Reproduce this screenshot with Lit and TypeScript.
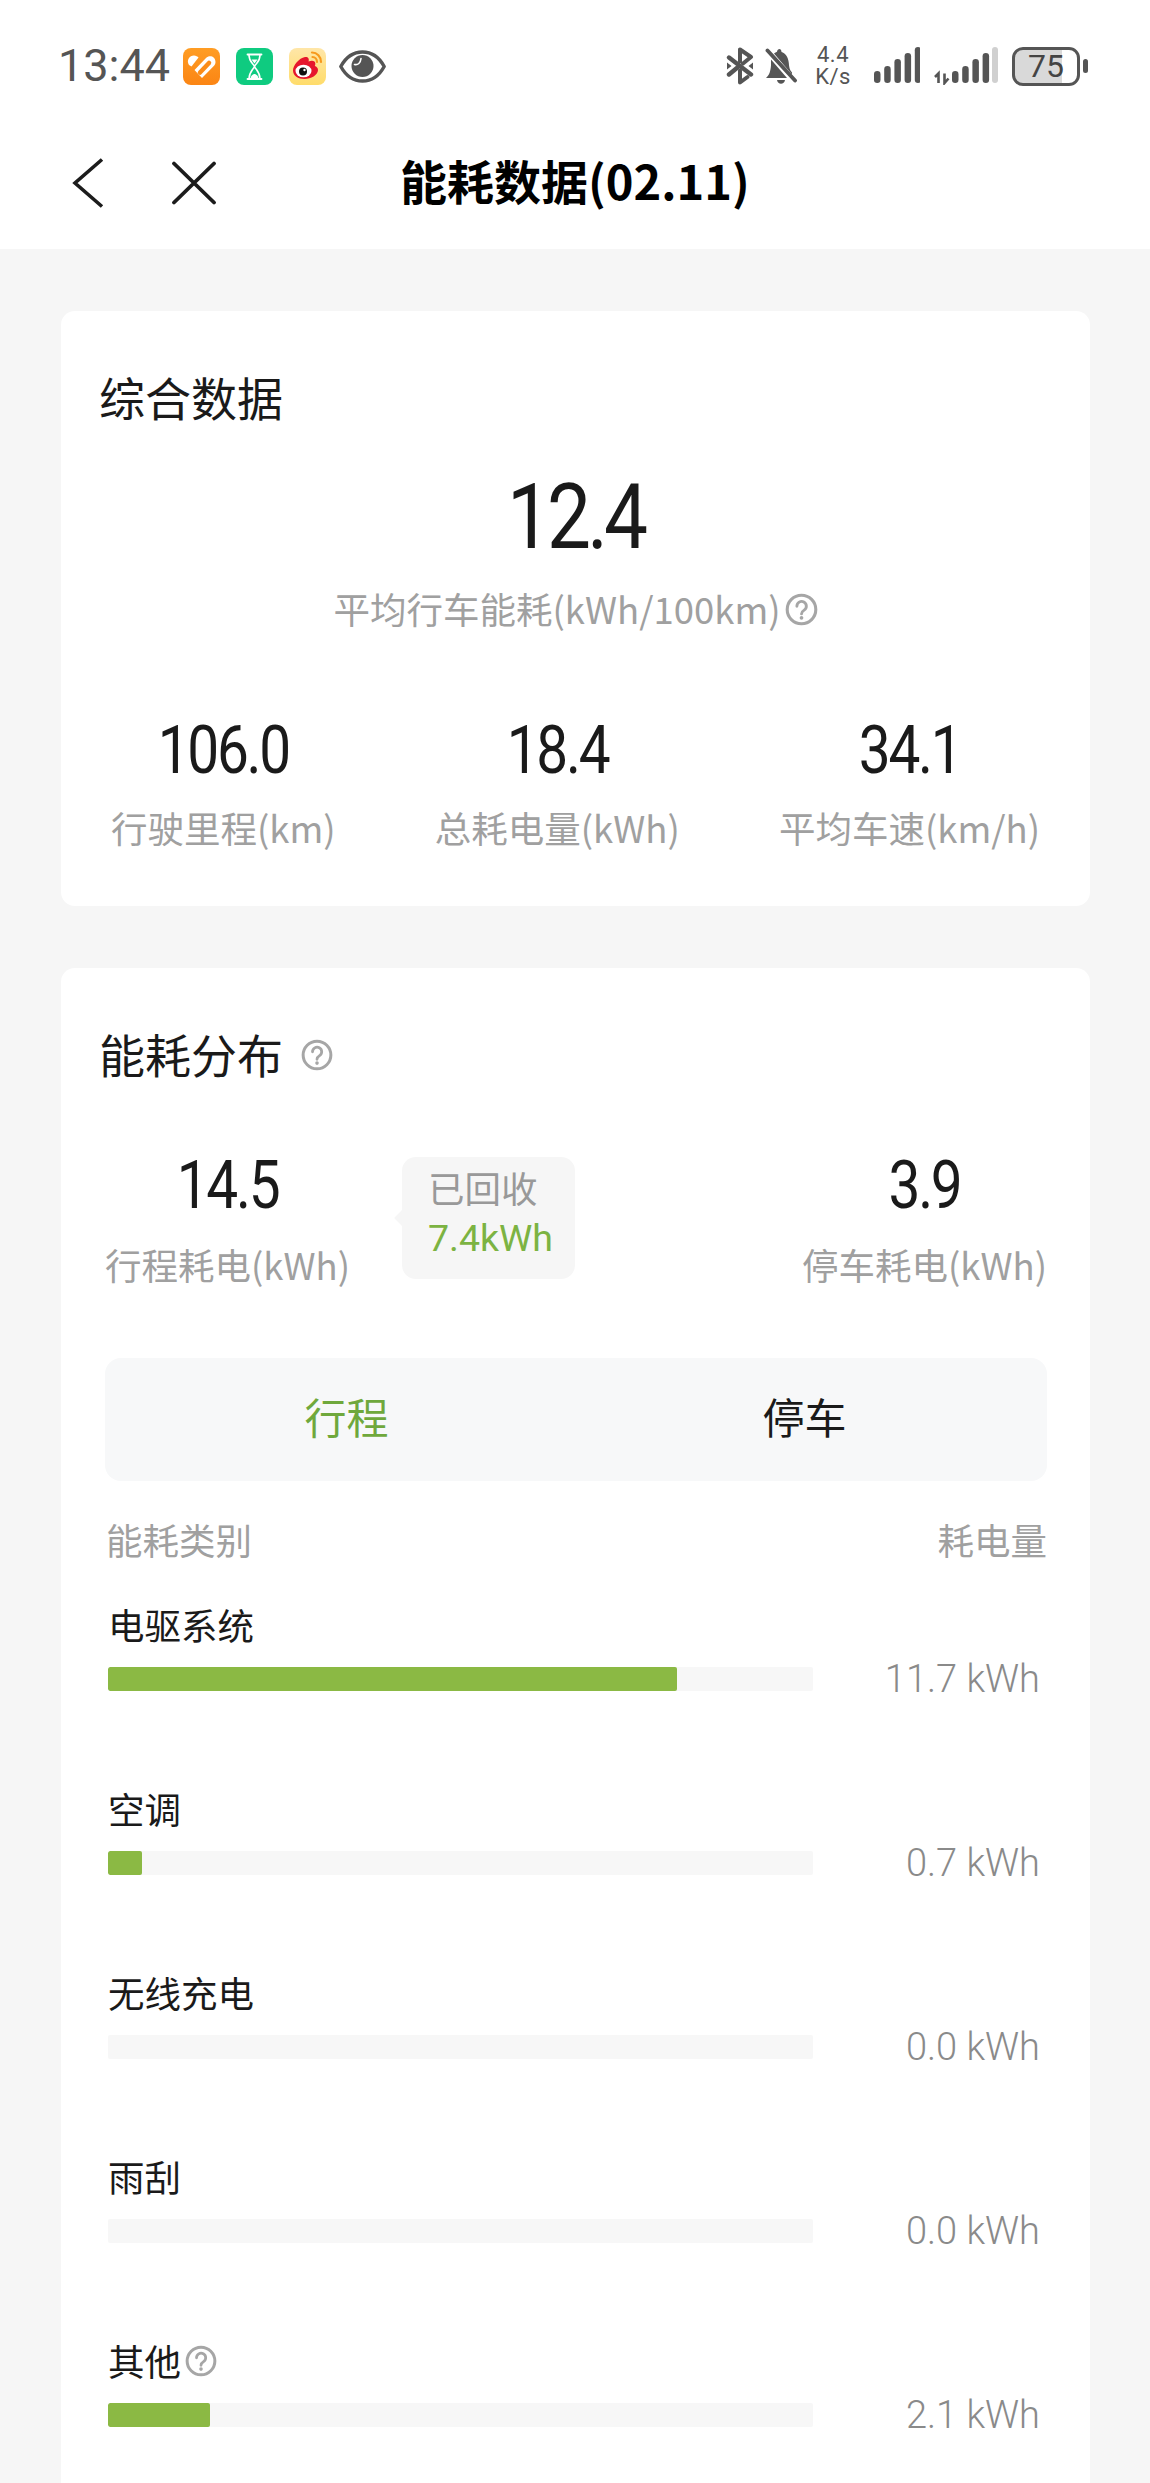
import { LitElement, html, css, svg } from "lit";
import { customElement } from "lit/decorators.js";

const help = (size: number) => html`<svg class="help" width=${size} height=${size} viewBox="0 0 30 30">
  <circle cx="15" cy="15" r="13" fill="none" stroke="#a6a6a6" stroke-width="2.8" />
  <path d="M10.800 12a4.300 4.300 0 1 1 6.600 3.600c-1.600 1-2.400 1.800-2.400 3.400" fill="none" stroke="#a6a6a6" stroke-width="2.600" stroke-linecap="round" />
  <circle cx="15" cy="22.600" r="1.700" fill="#a6a6a6" />
</svg>`;

const bars = (heights: number[], x0: number) =>
  heights.map(
    (h, i) => svg`<rect x=${x0 + i * 10.2} y=${36 - h} width="6.500" height=${h} rx="3.200" fill="#555" />`
  );

const rows = [
  { name: "电驱系统", pct: 80.7, value: "11.7 kWh" },
  { name: "空调", pct: 4.8, value: "0.7 kWh" },
  { name: "无线充电", pct: 0, value: "0.0 kWh" },
  { name: "雨刮", pct: 0, value: "0.0 kWh" },
  { name: "其他", pct: 14.5, value: "2.1 kWh", help: true },
];

@customElement("app-root")
export class AppRoot extends LitElement {
  static styles = css`
    :host {
      display: block;
      width: 1150px;
      height: 2483px;
      overflow: hidden;
      background: #f6f6f6;
      font-family: "Noto Sans CJK SC", "Noto Sans", sans-serif;
      color: #1a1a1a;
    }
    .top {
      background: #fff;
    }
    .status {
      height: 100px;
      padding-top: 16px;
      display: flex;
      align-items: center;
      padding-left: 58px;
      color: #555;
    }
    .time {
      font-family: Roboto, sans-serif;
      font-size: 45px;
      line-height: 44px;
      width: 125px;
    }
    .apps {
      display: flex;
      align-items: center;
    }
    .apps svg {
      display: block;
    }
    .apps .app {
      margin-right: 16px;
    }
    .apps .eye {
      margin-left: -3px;
    }
    .sys {
      margin-left: auto;
      display: flex;
      align-items: center;
      padding-right: 62px;
    }
    .sys svg {
      display: block;
    }
    .speed {
      width: 38px;
      margin: 0 22px 0 17px;
      font-family: Roboto, sans-serif;
      text-align: center;
      font-size: 22px;
      line-height: 22px;
      letter-spacing: 0.5px;
    }
    .battery {
      margin-left: 14px;
      width: 68px;
      height: 39px;
      box-sizing: border-box;
      border: 3px solid #555;
      border-radius: 11px;
      background: linear-gradient(90deg, #d9d9d9 76%, #fff 76%);
      font-family: Roboto, sans-serif;
      font-size: 32px;
      line-height: 33px;
      text-align: center;
      color: #444;
    }
    .tip {
      margin-left: 3px;
      width: 5px;
      height: 14px;
      border-radius: 3px;
      background: #555;
    }
    .nav {
      height: 133px;
      display: flex;
      align-items: center;
      padding-left: 72px;
    }
    .nav svg {
      display: block;
    }
    .nav .close {
      margin-left: 67px;
    }
    .title {
      margin: 0 0 6px 183px;
      font-size: 47px;
      line-height: 60px;
      font-weight: 700;
      color: #000;
      white-space: nowrap;
    }
    main {
      padding: 62px 60px 0 61px;
    }
    .card {
      background: #fff;
      border-radius: 14px;
      margin-bottom: 62px;
    }
    .overview {
      padding: 57px 50px 53px;
    }
    .card-title {
      font-size: 46px;
      line-height: 60px;
      margin-top: -2px;
      margin-bottom: 2px;
      display: flex;
      align-items: center;
    }
    .overview .card-title {
      margin-left: -12px;
    }
    .num {
      font-family: Roboto, sans-serif;
      color: #1a1a1a;
      transform: scaleX(0.86);
      letter-spacing: -0.04em;
    }
    .big {
      margin-top: 46px;
      font-size: 91px;
      line-height: 90px;
      text-align: center;
      letter-spacing: -0.05em;
    }
    .sub {
      margin-top: 22px;
      font-size: 36.5px;
      line-height: 50px;
      color: #a0a0a0;
      display: flex;
      justify-content: center;
      align-items: center;
      white-space: nowrap;
      gap: 4px;
    }
    .stats {
      margin-top: 77px;
      display: flex;
      justify-content: space-between;
      text-align: center;
    }
    .stat-value {
      font-size: 66px;
      line-height: 80px;
    }
    .stat-label {
      margin-top: 12px;
      font-size: 36.5px;
      line-height: 50px;
      color: #a0a0a0;
      white-space: nowrap;
    }
    .dist {
      padding: 57px 43px 120px 44px;
    }
    .dist .card-title {
      margin-left: -6px;
      gap: 18px;
    }
    .dist .card-title .help {
      margin-top: 3px;
    }
    .energy {
      margin-top: 63px;
      display: flex;
      align-items: flex-start;
    }
    .energy .stat {
      text-align: center;
    }
    .energy .stat-label {
      margin-top: 14px;
    }
    .energy .stat.right {
      margin-left: auto;
    }
    .recovered {
      position: relative;
      margin: 11px 0 0 52px;
      width: 173px;
      height: 122px;
      box-sizing: border-box;
      padding: 6px 0 0 26px;
      border-radius: 14px;
      background: #f6f6f6;
      font-size: 36.5px;
      line-height: 50px;
      color: #999;
    }
    .recovered::before {
      content: "";
      position: absolute;
      left: -5px;
      top: 54px;
      width: 14px;
      height: 14px;
      background: #f6f6f6;
      transform: rotate(45deg);
    }
    .recovered b {
      display: block;
      font-family: Roboto, sans-serif;
      font-weight: 400;
      color: #7cb342;
      font-size: 37.5px;
    }
    .tabs {
      margin-top: 68px;
      height: 123px;
      box-sizing: border-box;
      padding-bottom: 8px;
      border-radius: 16px;
      background: #f7f8f9;
      display: grid;
      grid-template-columns: 1fr 1fr;
      align-items: center;
      text-align: center;
      font-size: 42px;
      line-height: 60px;
    }
    .tab.on {
      color: #6fa83c;
      padding-left: 12px;
    }
    .tab.off {
      padding-right: 14px;
    }
    .head {
      margin-top: 34px;
      display: flex;
      justify-content: space-between;
      padding-left: 1px;
      font-size: 36.5px;
      line-height: 50px;
      color: #a0a0a0;
    }
    .list {
      margin-top: 35px;
      padding: 0 7px 0 3px;
      display: flex;
      flex-direction: column;
      gap: 93px;
    }
    .row-name {
      font-size: 36.5px;
      line-height: 50px;
      margin-bottom: 17px;
      display: flex;
      align-items: center;
      gap: 4px;
    }
    .row-line {
      display: flex;
      align-items: center;
      height: 24px;
    }
    .track {
      width: 705px;
      height: 24px;
      background: #f7f7f7;
      border-radius: 2px;
      overflow: hidden;
    }
    .fill {
      height: 100%;
      background: #8bb944;
      border-radius: 2px;
    }
    .row-value {
      margin-left: auto;
      font-family: Roboto, sans-serif;
      font-weight: 300;
      font-size: 38px;
      line-height: 24px;
      color: #8a8a8a;
      white-space: nowrap;
    }
  `;

  renderApps() {
    return html`<div class="apps">
      <svg class="app" width="37" height="37" viewBox="0 0 37 37">
        <defs>
          <linearGradient id="og" x1="0" y1="0" x2="0" y2="1">
            <stop offset="0" stop-color="#ff9d24" /><stop offset="1" stop-color="#fb8514" />
          </linearGradient>
        </defs>
        <rect width="37" height="37" rx="8" fill="url(#og)" />
        <path d="M6 17c-3-4.500.5-9.500 5-9.500 2 0 3.500 1 4.500 2L8.500 18.500z" fill="#fff" />
        <path d="M11.500 22 23 10c3.200-3.300 9.500-1.800 9.500 4 0 1.600-.7 3-1.700 4L19 30z" fill="#fff" />
        <path d="M17 24.500 26 15" stroke="#fb8c18" stroke-width="4.500" stroke-linecap="round" />
      </svg>
      <svg class="app" width="37" height="37" viewBox="0 0 37 37">
        <rect width="37" height="37" rx="8" fill="#0fcb80" />
        <path d="M11.500 6.500h14M11.500 31h14" stroke="#fff" stroke-width="1.800" stroke-linecap="round" />
        <path d="M13 7c0 7 4 8 5.500 11.500C17 22 13 24 13 31M24 7c0 7-4 8-5.500 11.500C20 22 24 24 24 31" fill="none" stroke="#fff" stroke-width="1.600" />
        <path d="M15.500 11.500h6L18.500 15.500z" fill="#fff" />
        <path d="M14.500 30c1-3 2.500-4 4-4s3 1 4 4z" fill="#fff" />
      </svg>
      <svg class="app" width="37" height="37" viewBox="0 0 37 37">
        <defs>
          <linearGradient id="yg" x1="0" y1="0" x2="0" y2="1">
            <stop offset="0" stop-color="#ffe6a8" /><stop offset="1" stop-color="#ffdc6a" />
          </linearGradient>
        </defs>
        <rect width="37" height="37" rx="8" fill="url(#yg)" />
        <path d="M4 22.500c0-5 6-12.500 12-13.500 3-.4 4.500 1.500 3.500 4.500 4-1.500 6.800-.5 6.800 2 0 1 0 1.800-.5 2.500 1.800.6 3.200 2 3.200 4 0 5-7 9-13.500 9C9 31 4 27.500 4 22.500z" fill="#e6162d" />
        <ellipse cx="14.500" cy="23" rx="8" ry="6.300" fill="#fff" />
        <circle cx="14" cy="23.500" r="4" fill="#111" />
        <circle cx="15.500" cy="22" r="1.200" fill="#fff" />
        <path d="M23 4.500c5 0 9 4 9 9.500M23.500 9c2.500 0 4.500 2 4.500 5" fill="none" stroke="#f7991d" stroke-width="2.200" stroke-linecap="round" />
      </svg>
      <svg class="eye" width="47" height="33" viewBox="0 0 47 33">
        <path d="M1.800 16.500C7 7 14.500 2 23.500 2s16.500 5 21.700 14.500C40 26 32.500 31 23.500 31S7 26 1.800 16.500z" fill="none" stroke="#555" stroke-width="3.400" stroke-linejoin="round" />
        <circle cx="23.500" cy="16" r="11" fill="#555" />
        <path d="M15.500 14.500c3.500.8 6-1.500 6.500-6" fill="none" stroke="#fff" stroke-width="1.600" stroke-linecap="round" />
      </svg>
    </div>`;
  }

  renderSys() {
    return html`<div class="sys">
      <svg style="margin-right:-1px" width="28" height="38" viewBox="0 0 28 38">
        <path d="M3 10.500 25 27.500M3 27.500 11.500 20.500" fill="none" stroke="#555" stroke-width="4.400" stroke-linecap="round" />
        <path d="M17 16.500 25 10 14 2.500v12M14 23.500V35.500L21.500 30" fill="none" stroke="#555" stroke-width="4" stroke-linejoin="round" stroke-linecap="round" />
        <path d="M1 15.500l4.500 3.500-4.500 3.500zM27 15.500l-4.500 3.500 4.500 3.500z" fill="#555" />
      </svg>
      <svg style="margin-left:12px" width="32" height="38" viewBox="0 0 32 38">
        <path d="M9 6.500 27 27.500V25.500c-2.500-2.500-3-6-3.200-9.500C23.300 9.500 20 6 16.500 5c0-4-4-4-4.500-.2-1 .3-2 .9-3 1.700z" fill="#555" />
        <path d="M6 12.500 22 31H1c3.500-3 4.500-7 5-12.500z" fill="#555" />
        <path d="M12 33h8c-.5 2.500-2 3.800-4 3.800S12.500 35.500 12 33z" fill="#555" />
        <path d="M2.500 3.500 30 33.500" stroke="#555" stroke-width="3.800" stroke-linecap="round" />
      </svg>
      <div class="speed">4.4<br />K/s</div>
      <svg width="46" height="38" viewBox="0 0 46 38">${bars([12, 17, 24, 30, 36], 0)}</svg>
      <svg style="margin-left:14px" width="64" height="38" viewBox="0 0 64 38">
        <path d="M1 30 4.500 26.500V36M10.500 26.500V36L14.500 31.500" fill="none" stroke="#555" stroke-width="2.600" />
        ${bars([12, 17, 24, 30], 18)}
        <rect x="58" y="0" width="6" height="36" rx="3" fill="#d0d0d0" />
      </svg>
      <div class="battery">75</div>
      <div class="tip"></div>
    </div>`;
  }

  render() {
    return html`
      <div class="top">
        <div class="status">
          <div class="time">13:44</div>
          ${this.renderApps()} ${this.renderSys()}
        </div>
        <div class="nav">
          <svg width="32" height="50" viewBox="0 0 32 50">
            <path d="M30 1.500 3 25l27 23.500" fill="none" stroke="#1c1c1c" stroke-width="3.600" />
          </svg>
          <svg class="close" width="46" height="44" viewBox="0 0 46 44">
            <path d="M3 2.500 43 41.500M43 2.500 3 41.500" fill="none" stroke="#1c1c1c" stroke-width="3.800" stroke-linecap="round" />
          </svg>
          <div class="title">能耗数据(02.11)</div>
        </div>
      </div>
      <main>
        <section class="card overview">
          <div class="card-title">综合数据</div>
          <div class="big num">12.4</div>
          <div class="sub">平均行车能耗(kWh/100km)${help(33)}</div>
          <div class="stats">
            <div><div class="stat-value num">106.0</div><div class="stat-label">行驶里程(km)</div></div>
            <div><div class="stat-value num">18.4</div><div class="stat-label">总耗电量(kWh)</div></div>
            <div><div class="stat-value num">34.1</div><div class="stat-label">平均车速(km/h)</div></div>
          </div>
        </section>
        <section class="card dist">
          <div class="card-title">能耗分布 ${help(32)}</div>
          <div class="energy">
            <div class="stat">
              <div class="stat-value num">14.5</div>
              <div class="stat-label">行程耗电(kWh)</div>
            </div>
            <div class="recovered">已回收<b>7.4kWh</b></div>
            <div class="stat right">
              <div class="stat-value num">3.9</div>
              <div class="stat-label">停车耗电(kWh)</div>
            </div>
          </div>
          <div class="tabs">
            <div class="tab on">行程</div>
            <div class="tab off">停车</div>
          </div>
          <div class="head"><span>能耗类别</span><span>耗电量</span></div>
          <div class="list">
            ${rows.map(
              (r) => html`<div class="row">
                <div class="row-name">${r.name}${r.help ? help(32) : ""}</div>
                <div class="row-line">
                  <div class="track"><div class="fill" style="width:${r.pct}%"></div></div>
                  <div class="row-value">${r.value}</div>
                </div>
              </div>`
            )}
          </div>
        </section>
      </main>
    `;
  }
}
